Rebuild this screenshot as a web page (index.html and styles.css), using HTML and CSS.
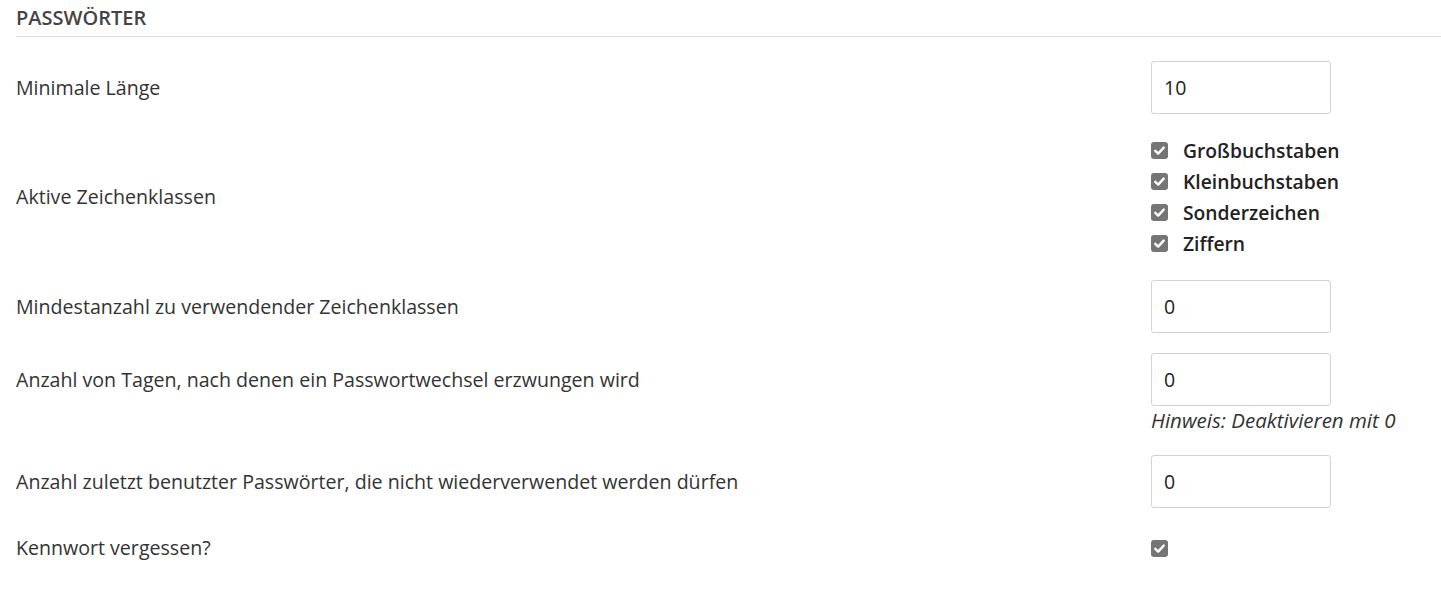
FILE: index.html
```html
<!DOCTYPE html>
<html lang="de">
<head>
<meta charset="utf-8">
<link rel="stylesheet" href="styles.css">
</head>
<body>
<section class="panel">
  <h2 class="section-title">PASSWÖRTER</h2>
  <div class="rows">
    <div class="row">
      <div class="label">Minimale Länge</div>
      <div class="control"><div class="input">10</div></div>
    </div>
    <div class="row">
      <div class="label">Aktive Zeichenklassen</div>
      <div class="control">
        <ul class="checks">
          <li><span class="cb"><svg viewBox="0 0 17 17"><path d="M4.3 8.8 L7.2 11.6 L12.7 5.6" /></svg></span>Großbuchstaben</li>
          <li><span class="cb"><svg viewBox="0 0 17 17"><path d="M4.3 8.8 L7.2 11.6 L12.7 5.6" /></svg></span>Kleinbuchstaben</li>
          <li><span class="cb"><svg viewBox="0 0 17 17"><path d="M4.3 8.8 L7.2 11.6 L12.7 5.6" /></svg></span>Sonderzeichen</li>
          <li><span class="cb"><svg viewBox="0 0 17 17"><path d="M4.3 8.8 L7.2 11.6 L12.7 5.6" /></svg></span>Ziffern</li>
        </ul>
      </div>
    </div>
    <div class="row">
      <div class="label">Mindestanzahl zu verwendender Zeichenklassen</div>
      <div class="control"><div class="input">0</div></div>
    </div>
    <div class="row row-top">
      <div class="label label-input">Anzahl von Tagen, nach denen ein Passwortwechsel erzwungen wird</div>
      <div class="control">
        <div class="input">0</div>
        <div class="hint">Hinweis: Deaktivieren mit 0</div>
      </div>
    </div>
    <div class="row">
      <div class="label">Anzahl zuletzt benutzter Passwörter, die nicht wiederverwendet werden dürfen</div>
      <div class="control"><div class="input">0</div></div>
    </div>
    <div class="row row-last">
      <div class="label">Kennwort vergessen?</div>
      <div class="control"><span class="cb"><svg viewBox="0 0 17 17"><path d="M4.3 8.8 L7.2 11.6 L12.7 5.6" /></svg></span></div>
    </div>
  </div>
</section>
</body>
</html>
```

FILE: styles.css
```css
html, body {
  margin: 0;
  padding: 0;
  background: #fff;
}
body {
  font-family: "Open Sans", "Noto Sans", sans-serif;
  color: #333;
  font-size: 19.6px;
}
.panel {
  padding-left: 16px;
}
.section-title {
  margin: 0;
  font-size: 20px;
  font-weight: 600;
  color: #444;
  line-height: 24px;
  padding-top: 6px;
  padding-bottom: 6px;
  border-bottom: 1px solid #dcdcdc;
}
.rows {
  display: flex;
  flex-direction: column;
  gap: 20px;
  padding-top: 24px;
}
.row {
  display: grid;
  grid-template-columns: 1135px 1fr;
  align-items: center;
}
.row-top {
  align-items: start;
}
.label {
  line-height: 28px;
}
.label-input {
  display: flex;
  align-items: center;
  min-height: 53px;
}
.control {
  display: flex;
  flex-direction: column;
  align-items: flex-start;
}
.input {
  box-sizing: border-box;
  width: 180px;
  height: 53px;
  border: 1px solid #d3d3d3;
  border-radius: 3px;
  padding: 0 12px;
  display: flex;
  align-items: center;
  color: #222;
  font-size: 19.5px;
}
.hint {
  font-style: italic;
  font-size: 20.5px;
  line-height: 29px;
  color: #333;
}
.checks {
  list-style: none;
  margin: 0;
  padding: 1px 0;
}
.checks li {
  display: flex;
  align-items: center;
  height: 31px;
  font-weight: 600;
  font-size: 19.3px;
  color: #222;
}
.cb {
  box-sizing: border-box;
  width: 17px;
  height: 17px;
  border-radius: 3px;
  background: #757575;
  display: inline-flex;
  margin-right: 15px;
  flex: none;
}
.cb svg {
  width: 17px;
  height: 17px;
}
.cb path {
  fill: none;
  stroke: #fff;
  stroke-width: 2.4;
  stroke-linecap: round;
  stroke-linejoin: round;
}
.row-last {
  padding-top: 6px;
}
```
